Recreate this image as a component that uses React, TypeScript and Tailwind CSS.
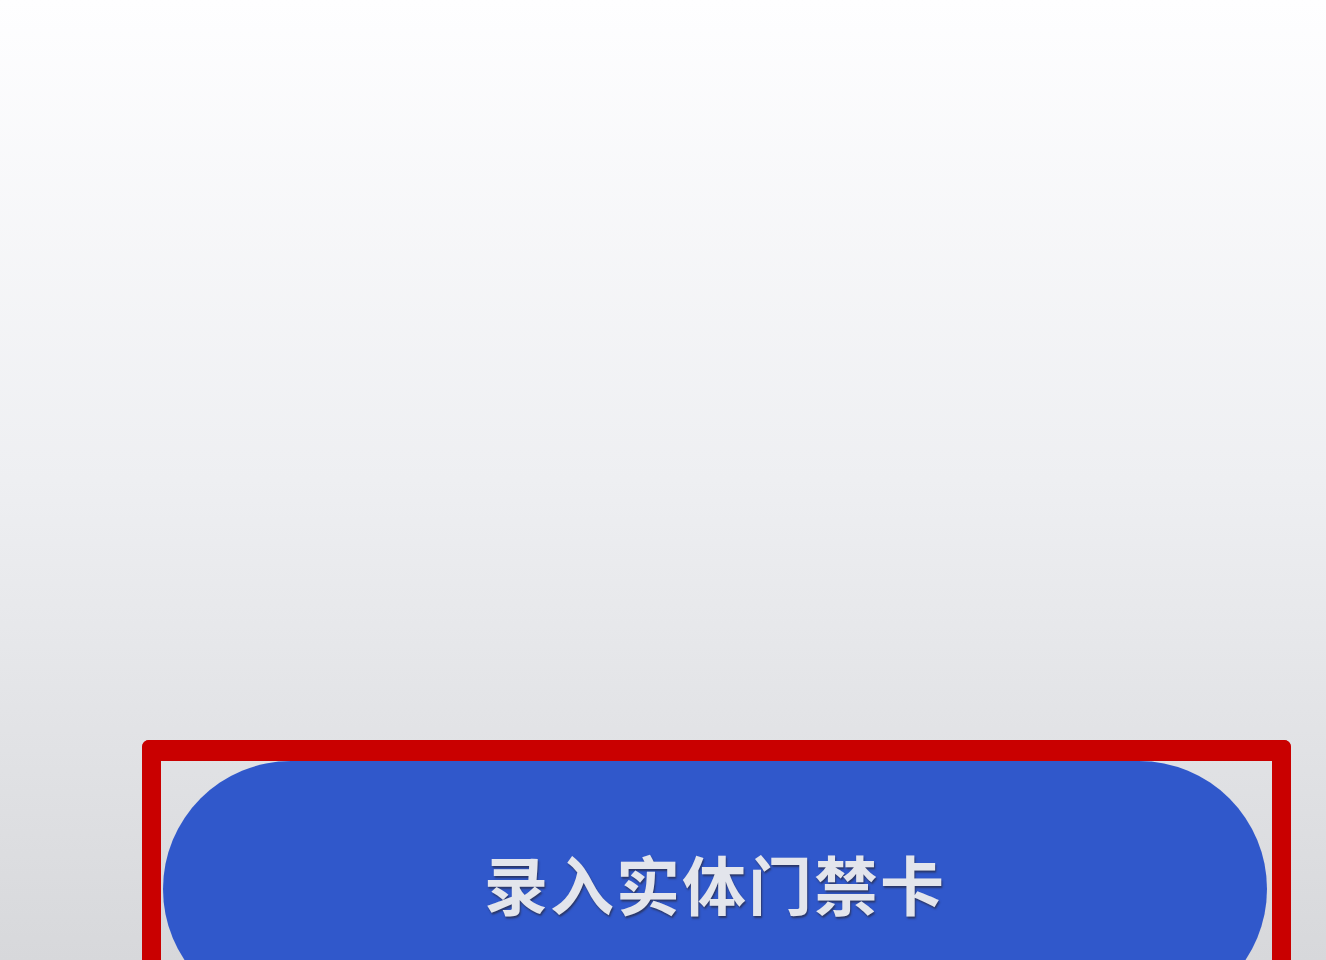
export default function App() {
  return (
    <div className="h-screen overflow-hidden bg-gradient-to-b from-[#fefeff] via-[#eeeff2] to-[#d7d8db] pl-[142px] pr-[35px] pt-[740px]">
      <div className="h-[320px] rounded-t-[7px] border-x-[19px] border-t-[21px] border-[#c90000] pl-[2px] pr-[5px]">
        <button
          type="button"
          className="flex h-[256px] w-full items-start justify-center rounded-full bg-[#3058cb] pt-[89px] text-[64px] font-bold leading-none tracking-[2px] text-[#e3e5ec] [font-family:'Noto_Sans_CJK_SC',sans-serif] [text-shadow:1px_2px_2px_rgba(40,40,60,0.7)]"
        >
          录入实体门禁卡
        </button>
      </div>
    </div>
  );
}
